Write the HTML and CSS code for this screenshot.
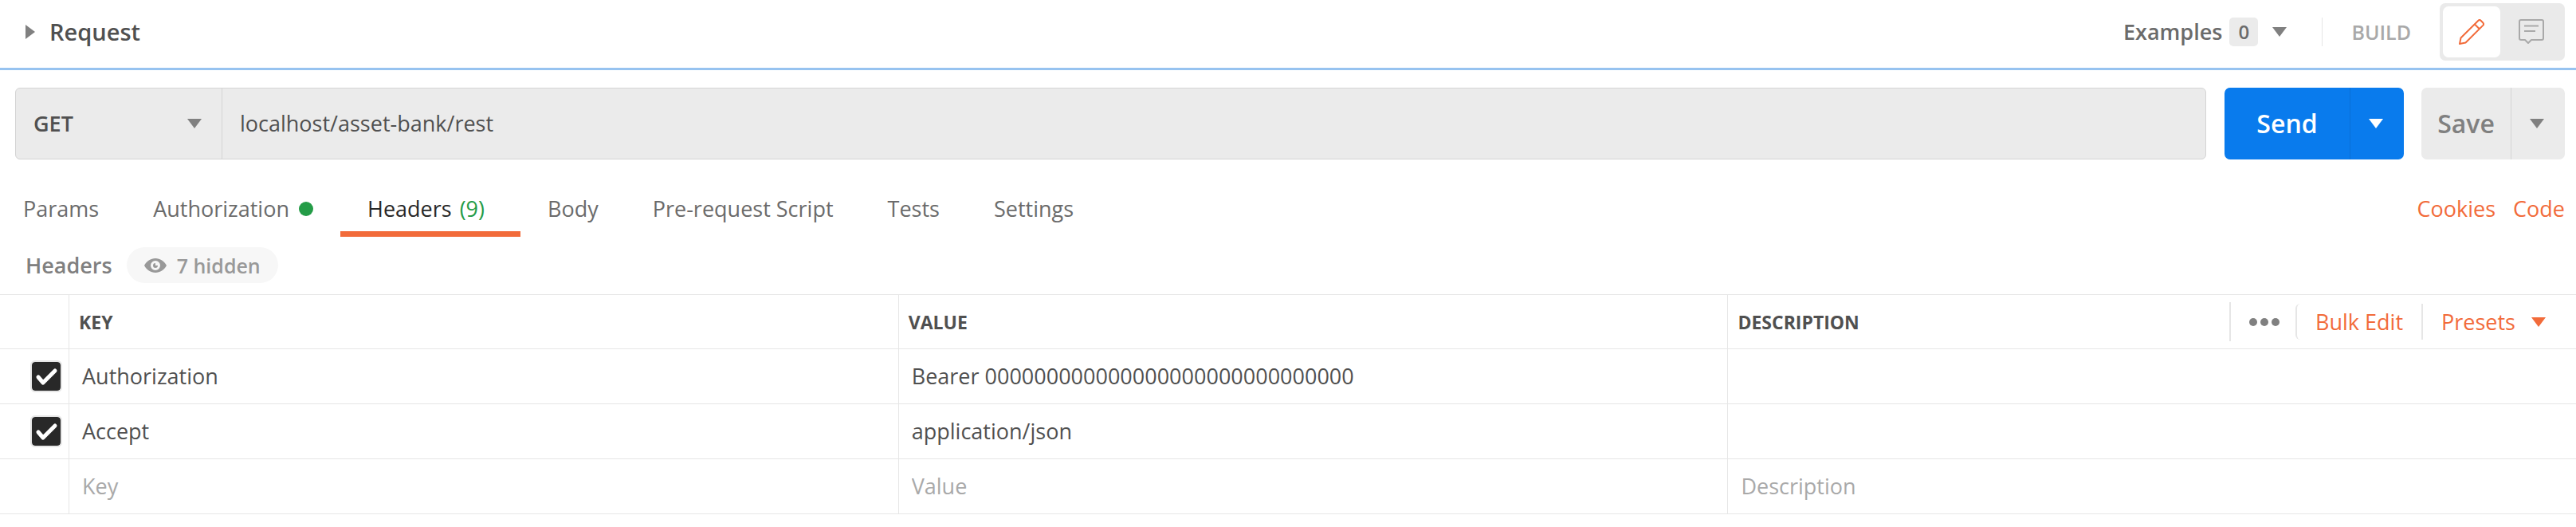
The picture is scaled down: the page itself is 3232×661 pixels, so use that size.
FILE: index.html
```html
<!DOCTYPE html>
<html lang="en">
<head>
  <meta charset="UTF-8">
  <meta name="viewport" content="width=device-width, initial-scale=1.0">
  <title>Request</title>
  <link rel="stylesheet" href="styles.css">
</head>
<body>
  <header class="request-header">
    <button type="button" class="request-name">
      <svg class="caret-right" viewBox="0 0 12 18"><path d="M0 0L12 9L0 18Z"/></svg>
      Request
    </button>
    <div class="header-actions">
      <button type="button" class="examples">
        Examples <span class="count">0</span>
        <svg class="caret" viewBox="0 0 18 12"><path d="M0 0H18L9 12Z"/></svg>
      </button>
      <span class="build">BUILD</span>
      <div class="mode-toggle">
        <button type="button" class="mode active" aria-label="Edit">
          <svg class="icon" viewBox="0 0 32 32"><path d="M1 31L2.500 23.500L24.500 1.800C25.500 .8 26.500 .8 27.500 1.800L30.500 4.800C31.300 5.800 31.300 6.600 30.500 7.600L8.500 29.500ZM20 6.500L25.800 12.200"/></svg>
        </button>
        <button type="button" class="mode" aria-label="Comments">
          <svg class="icon" viewBox="0 0 32 32"><path d="M3 1H29Q31 1 31 3V24Q31 26 29 26H16L12 30L8 26H3Q1 26 1 24V3Q1 1 3 1ZM7 8.500H25M7 15H21"/></svg>
        </button>
      </div>
    </div>
  </header>

  <form class="request-bar">
    <div class="url-box">
      <div class="method">
        <select id="method" aria-label="Method">
          <option>GET</option>
          <option>POST</option>
          <option>PUT</option>
          <option>DELETE</option>
        </select>
        <svg class="caret" viewBox="0 0 18 12"><path d="M0 0H18L9 12Z"/></svg>
      </div>
      <input type="text" id="url" class="url" aria-label="Request URL" value="localhost/asset-bank/rest">
    </div>
    <div class="split send">
      <button type="button" class="split-main">Send</button>
      <button type="button" class="split-more" aria-label="Send options">
        <svg class="caret" viewBox="0 0 18 12"><path d="M0 0H18L9 12Z"/></svg>
      </button>
    </div>
    <div class="split save">
      <button type="button" class="split-main">Save</button>
      <button type="button" class="split-more" aria-label="Save options">
        <svg class="caret" viewBox="0 0 18 12"><path d="M0 0H18L9 12Z"/></svg>
      </button>
    </div>
  </form>

  <nav class="tabs">
    <button type="button" class="tab">Params</button>
    <button type="button" class="tab">Authorization <span class="dot"></span></button>
    <button type="button" class="tab active">Headers <span class="tab-count">(9)</span></button>
    <button type="button" class="tab">Body</button>
    <button type="button" class="tab">Pre-request Script</button>
    <button type="button" class="tab">Tests</button>
    <button type="button" class="tab">Settings</button>
    <div class="tab-links">
      <a href="#">Cookies</a>
      <a href="#">Code</a>
    </div>
  </nav>

  <div class="subheader">
    <span>Headers</span>
    <button type="button" class="hidden-toggle">
      <svg class="eye" viewBox="0 0 28 18"><path fill-rule="evenodd" d="M14 0C8 0 3 3.500 0 9C3 14.500 8 18 14 18S25 14.500 28 9C25 3.500 20 0 14 0ZM14 3A6 6 0 1 1 14 15A6 6 0 1 1 14 3Z"/><path d="M14 6V9H17A3 3 0 1 1 14 6Z"/></svg>
      7 hidden
    </button>
  </div>

  <table class="headers-table">
    <colgroup>
      <col class="col-check">
      <col class="col-key">
      <col class="col-value">
      <col>
    </colgroup>
    <thead>
      <tr>
        <th></th>
        <th>KEY</th>
        <th>VALUE</th>
        <th>
          <div class="th-row">
            DESCRIPTION
            <div class="table-actions">
              <button type="button" class="more" aria-label="More">
                <svg class="dots" viewBox="0 0 38 10"><circle cx="5" cy="5" r="5"/><circle cx="19" cy="5" r="5"/><circle cx="33" cy="5" r="5"/></svg>
              </button>
              <button type="button" class="bulk">Bulk Edit</button>
              <button type="button" class="presets">
                Presets
                <svg class="caret" viewBox="0 0 18 12"><path d="M0 0H18L9 12Z"/></svg>
              </button>
            </div>
          </div>
        </th>
      </tr>
    </thead>
    <tbody>
      <tr>
        <td><input type="checkbox" class="check" aria-label="Authorization" checked></td>
        <td>Authorization</td>
        <td>Bearer 000000000000000000000000000000</td>
        <td></td>
      </tr>
      <tr>
        <td><input type="checkbox" class="check" aria-label="Accept" checked></td>
        <td>Accept</td>
        <td>application/json</td>
        <td></td>
      </tr>
      <tr>
        <td></td>
        <td><input type="text" class="cell-input" placeholder="Key" aria-label="Key"></td>
        <td><input type="text" class="cell-input" placeholder="Value" aria-label="Value"></td>
        <td><input type="text" class="cell-input" placeholder="Description" aria-label="Description"></td>
      </tr>
    </tbody>
  </table>
</body>
</html>
```
FILE: styles.css
```css
* { box-sizing: border-box; }
body { margin: 0; background: #fff; color: #505050; font-family: "Open Sans", sans-serif; font-size: 27px; line-height: 36px; }
button, input, select { margin: 0; padding: 0; border: none; background: none; color: inherit; font: inherit; }
button { display: flex; align-items: center; cursor: pointer; }
a { color: #f26b3a; text-decoration: none; }
svg { display: block; flex: none; fill: currentColor; }
.caret { width: 18px; height: 12px; }

.request-header { display: flex; align-items: center; justify-content: space-between; padding: 4px 14px 9px 32px; border-bottom: 3px solid #97c3f0; }
.request-name { gap: 18px; font-size: 29px; font-weight: 600; }
.caret-right { width: 12px; height: 18px; fill: #808080; }
.header-actions { display: flex; align-items: center; }
.examples { color: #6b6b6b; font-weight: 600; padding-right: 44px; }
.examples .caret { fill: #808080; }
.count { width: 36px; margin: 0 18px 0 9px; border-radius: 5px; background: #ebebeb; color: #6b6b6b; font-size: 24px; text-align: center; }
.build { padding-left: 36px; border-left: 1px solid #e6e6e6; color: #a9a9a9; font-size: 25px; font-weight: 600; }
.mode-toggle { display: flex; gap: 3px; margin-left: 36px; padding: 4px 6px 4px 4px; border-radius: 7px; background: #eaeaea; }
.mode { justify-content: center; width: 72px; height: 64px; border-radius: 7px; color: #a9a9a9; }
.mode.active { background: #fff; color: #f26b3a; }
.icon { width: 32px; height: 32px; fill: none; stroke: currentColor; stroke-width: 2; stroke-linejoin: round; }

.request-bar { display: flex; height: 134px; padding: 22px 14px 22px 19px; }
.url-box { display: flex; flex: 1; margin-right: 23px; border: 1px solid #d4d4d4; border-radius: 6px; background: #ebebeb; }
.method { display: grid; align-items: center; width: 259px; border-right: 1px solid #d4d4d4; }
.method select, .method .caret { grid-area: 1 / 1; }
.method select { width: 100%; height: 100%; padding-left: 22px; appearance: none; font-size: 27px; font-weight: 600; }
.method .caret { justify-self: end; margin-right: 25px; fill: #808080; pointer-events: none; }
.url { flex: 1; padding: 0 22px; }
.split { display: flex; border-radius: 7px; font-size: 32px; font-weight: 600; }
.split button { justify-content: center; }
.send { width: 225px; margin-right: 22px; background: #097bed; color: #fff; }
.save { width: 180px; background: #ebebeb; color: #808080; }
.split-main { flex: 1; }
.split .split-more { width: 68px; padding-right: 4px; border-left: 1px solid #d4d4d4; }
.send .split-more { border-color: #0a6fd6; }

.tabs { display: flex; padding-right: 14px; }
.tab { padding: 22px 34px 10px; border-bottom: 7px solid transparent; color: #6b6b6b; }
.tab:first-child { padding-left: 29px; }
.tab.active { padding-right: 45px; border-color: #f26b3a; color: #282828; }
.dot { width: 18px; height: 18px; margin-left: 12px; border-radius: 50%; background: #249c47; }
.tab-count { margin-left: 10px; color: #249c47; }
.tab-links { display: flex; gap: 22px; margin-left: auto; padding-top: 22px; }

.subheader { display: flex; align-items: center; gap: 18px; padding: 13px 32px 14px; color: #808080; font-weight: 600; }
.hidden-toggle { gap: 13px; height: 45px; padding: 0 22px; border-radius: 23px; background: #f7f7f7; color: #999; font-size: 25px; }
.eye { width: 28px; height: 18px; }

.headers-table { width: 100%; table-layout: fixed; border-top: 1px solid #e6e6e6; border-spacing: 0; }
.col-check { width: 87px; }
.col-key, .col-value { width: 32.2%; }
th, td { height: 69px; padding: 0 16px; border-right: 1px solid #e6e6e6; border-bottom: 1px solid #e6e6e6; text-align: left; }
th { height: 68px; padding: 0 12px; font-size: 23px; font-weight: 700; }
th:last-child, td:last-child { border-right: none; }
td:first-child { padding: 0 8px 0 38px; }
.th-row { display: flex; align-items: center; justify-content: space-between; }
.table-actions { display: flex; align-items: center; padding-right: 26px; color: #f26b3a; font-size: 27px; font-weight: 400; }
.table-actions button { height: 45px; padding-left: 23px; border-left: 2px solid #e6e6e6; }
.table-actions .more { height: 49px; color: #808080; }
.dots { width: 38px; height: 10px; margin-right: 20px; }
.table-actions .bulk { padding-right: 23px; border-radius: 6px 0 0 6px; }
.presets { gap: 20px; }

.check { display: block; width: 40px; height: 40px; border: 2px solid #e6e6e6; border-radius: 6px; appearance: none; background: #282828; background-clip: padding-box; }
.check:checked { background-image: url("data:image/svg+xml,%3Csvg xmlns='http://www.w3.org/2000/svg' viewBox='0 0 36 36'%3E%3Cpath d='M8 19L14 26L29 11' fill='none' stroke='white' stroke-width='5' stroke-linecap='round' stroke-linejoin='round'/%3E%3C/svg%3E"); }
.cell-input { display: block; width: 100%; }
.cell-input::placeholder { color: #a9a9a9; opacity: 1; }
```
